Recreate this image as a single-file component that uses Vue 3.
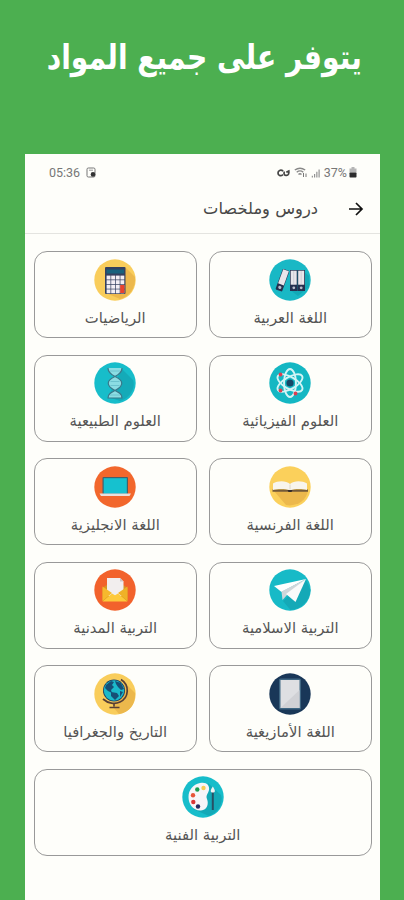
<template>
  <div class="page">
    <h1 class="headline" dir="rtl"><span>يتوفر على جميع المواد</span></h1>

    <div class="phone">
      <div class="status-bar">
        <div class="status-left">
          <span class="clock">05:36</span>
          <svg class="notify" viewBox="0 0 10 11">
            <rect x="1" y="1" width="8" height="9" rx="1.3" fill="none" stroke="#777" />
            <path d="M3 3.2h4" stroke="#999" />
            <circle cx="7" cy="7.4" r="2.3" fill="#333" />
          </svg>
        </div>
        <div class="status-right">
          <svg class="vpn" viewBox="0 0 13 8">
            <path d="M6.200 2C3.600.4 1 1.400 1 4s2.600 3.600 5 1.600" fill="none" stroke="#444" stroke-width="1.700" />
            <path d="M7.400 2.500c-1 2.200 0 4 2 3.900S12.200 4.300 11.800 2L9.300 3.200" fill="none" stroke="#444" stroke-width="1.700" />
          </svg>
          <svg class="wifi" viewBox="0 0 14 11">
            <g fill="none" stroke="#888" stroke-width="1.400">
              <path d="M.8 3Q6 -.6 11.200 3" />
              <path d="M2.700 5.200Q6 2.600 9.300 5.200" />
              <path d="M4.500 7.400Q6 6 7.500 7.400" />
            </g>
            <path d="M9.500 6v4M12 6.500v3.500" stroke="#777" />
          </svg>
          <svg class="signal" viewBox="0 0 10 10">
            <path d="M1.500 10V8M4 10V6M6.500 10V3.500M9 10V1" stroke="#909090" stroke-width="1.300" />
          </svg>
          <span class="percent">37%</span>
          <svg class="battery" viewBox="0 0 8 11">
            <path d="M2.500 0h3v1.500H7.500V5.500H.5V1.500h2z" fill="#b5b5b5" />
            <rect x=".5" y="5.500" width="7" height="5" rx=".8" fill="#2c2c2c" />
          </svg>
        </div>
      </div>

      <div class="app-bar" dir="rtl">
        <svg class="arrow" viewBox="0 0 16 16">
          <path d="M1 8h13M8 2l6 6-6 6" fill="none" stroke="#111" stroke-width="1.700" />
        </svg>
        <span class="app-title">دروس وملخصات</span>
      </div>

      <div class="grid" dir="rtl">
        <div
          v-for="subject in subjects"
          :key="subject.icon"
          class="card"
          :class="{ wide: subject.wide }"
        >
          <svg class="icon" viewBox="0 0 42 42">
            <circle cx="21" cy="21" r="20.700" :fill="subject.color" />

            <g v-if="subject.icon === 'binders'">
              <path d="M29 37l11-9V17l-7-6H21v20z" fill="#12a9b6" />
              <g transform="rotate(20 13 21)">
                <rect x="10" y="10" width="7" height="22" rx="1" fill="#25304f" />
                <rect x="10.500" y="10.500" width="6" height="15" fill="#e8e6ea" />
                <circle cx="13.500" cy="28.700" r="1.600" fill="#b9bdcb" />
              </g>
              <rect x="21" y="11" width="7.500" height="21" fill="#25304f" />
              <rect x="28.500" y="11" width="7.500" height="21" fill="#25304f" />
              <rect x="21.700" y="11.700" width="6" height="14" fill="#e8e6ea" />
              <rect x="29.200" y="11.700" width="6" height="14" fill="#e8e6ea" />
              <path d="M24.700 12v13M32.200 12v13" stroke="#cbc8d0" stroke-width=".8" />
              <circle cx="24.800" cy="28.800" r="1.400" fill="#b9bdcb" />
              <circle cx="32.200" cy="28.800" r="1.400" fill="#b9bdcb" />
            </g>

            <g v-else-if="subject.icon === 'calculator'">
              <path d="M31 8l10 10c1 11-6 20-15 22l-14-6z" fill="#ecb84c" />
              <rect x="11" y="8" width="20.500" height="27" rx="1" fill="#34405f" />
              <rect x="12.500" y="10.500" width="17.500" height="4" fill="#17617d" />
              <g fill="#f2eef4">
                <template v-for="row in 4" :key="row">
                  <rect
                    v-for="col in 4"
                    :key="col"
                    :x="8 + col * 4.600"
                    :y="12 + row * 4.600"
                    width="3.900"
                    height="3.900"
                  />
                </template>
              </g>
              <rect x="26.200" y="26" width="4.200" height="8" fill="#e8432e" />
            </g>

            <g v-else-if="subject.icon === 'atom'">
              <g fill="none" stroke="#d3f4f5" stroke-width="1.900">
                <ellipse cx="21" cy="21" rx="6" ry="14" />
                <ellipse cx="21" cy="21" rx="6" ry="14" transform="rotate(60 21 21)" />
                <ellipse cx="21" cy="21" rx="6" ry="14" transform="rotate(120 21 21)" />
              </g>
              <circle cx="21" cy="21" r="3.600" fill="#174766" />
              <circle cx="11.500" cy="12.500" r="1.900" fill="#dc3f52" />
              <circle cx="11.500" cy="28.500" r="1.900" fill="#dc3f52" />
              <circle cx="26.500" cy="31.500" r="1.900" fill="#dc3f52" />
            </g>

            <g v-else-if="subject.icon === 'dna'">
              <path d="M28 7l11 11c3 8-4 19-13 21l-12-4z" fill="#14aab8" />
              <g fill="#8bdde3" stroke="#39788a" stroke-width="1.200">
                <path d="M14 6c0 4 3 6.500 7 8.500 4-2 7-4.500 7-8.500" />
                <path d="M21 14.500c-9 4-9 9.500 0 14 9-4.500 9-10 0-14z" />
                <path d="M14 36c0-4 3-5.500 7-7.500 4 2 7 3.500 7 7.500z" />
              </g>
              <path d="M16 9h10M16.500 19.500h9M16.500 23.500h9M16 33h10" stroke="#6cc3ce" stroke-width="1" />
            </g>

            <g v-else-if="subject.icon === 'book'">
              <path d="M5 25l12 14c10 2 20-4 22-14z" fill="#ecb84c" />
              <path d="M3.500 23.500h35.500v2.200H3.500z" fill="#745a38" />
              <path d="M4 24V17.500c5-3 13-3 17 .5 4-3.500 12-3.500 17-.5V24c-5-1.500-12-1.500-17 .3C16 22.500 9 22.500 4 24z" fill="#f8f5ec" />
              <path d="M21 18.500v5" stroke="#d5cebd" stroke-width=".8" />
              <path d="M18.500 24h5l-1 2h-3z" fill="#352c2b" />
            </g>

            <g v-else-if="subject.icon === 'laptop'">
              <rect x="8.500" y="11" width="25.500" height="17.500" rx="1" fill="#45606a" />
              <rect x="9.700" y="12.200" width="23.100" height="15.500" fill="#16c1cf" />
              <path d="M5.500 27.500h31.500l-1.500 2.500H7z" fill="#e9e0dc" />
            </g>

            <g v-else-if="subject.icon === 'plane'">
              <path d="M37 11l4.500 10c-1 11-9 19-20 20L14 32z" fill="#14a9b7" />
              <path d="M37 10L5 17l7.500 6z" fill="#fff" />
              <path d="M37 10L12.500 22.500 13.500 31l4.500-5z" fill="#cfd6da" />
              <path d="M37 10L17 25l9.500 8z" fill="#fafafa" />
            </g>

            <g v-else-if="subject.icon === 'mail'">
              <path d="M8.500 19L21 10l12.500 9v13h-25z" fill="#d79426" />
              <path d="M13 9h13l3.500 3.500V27H13z" fill="#f2eeee" />
              <path d="M26 9v3.500h3.500z" fill="#cbc6c8" />
              <path d="M8.500 17.500V32L18 24z" fill="#f6b92d" />
              <path d="M33.500 17.500V32L24 24z" fill="#efb127" />
              <path d="M8.500 32.500L18 24.500l3 1.700 3-1.700 9.500 8z" fill="#fdc93b" />
            </g>

            <g v-else-if="subject.icon === 'tablet'">
              <rect x="10" y="5.500" width="22" height="31" rx="1.500" fill="#3f6682" />
              <rect x="11.500" y="7" width="19" height="28" fill="#dedfe2" />
              <path d="M30.500 17v18h-19z" fill="#d0d1d5" />
            </g>

            <g v-else-if="subject.icon === 'globe'">
              <path d="M31 10l10 10c1 11-6 20-16 21l-6-7z" fill="#ecb84c" />
              <path d="M27 6.500C36 12 35 25 26 29c-5 2.500-12 1.500-17-3" fill="none" stroke="#573e36" stroke-width="1.700" />
              <circle cx="20" cy="17.500" r="11" fill="#1d3d60" />
              <circle cx="20" cy="17.500" r="10.200" fill="#1bb9cb" />
              <path d="M12 12l5-4 3 1-2 3 2 2-3 3 1 3-4-2-3-3z" fill="#174f76" />
              <path d="M21 8l6 2 3 6-3 1-3-3-2-3zM17 19l6 1 2 3-4 4-4-4zM26 18l3 1-3 5z" fill="#174f76" />
              <path d="M20 30v3.500M15.500 34.500h10" stroke="#573e36" stroke-width="1.600" />
            </g>

            <g v-else-if="subject.icon === 'palette'">
              <path d="M26 7l13 12c3 9-4 18-12 21L11 33z" fill="#13a9b7" />
              <path d="M18 7c6-1.500 10 2 9 7-.8 4-3.500 5-2 9 2 5 0 11-6 11.500C11 35 6.500 28 6.500 21S11 8.500 18 7z" fill="#f7f5f8" />
              <circle cx="21.500" cy="12" r="2.200" fill="#f5cc55" />
              <circle cx="15.300" cy="13.500" r="2.200" fill="#1c9d50" />
              <circle cx="11" cy="19.300" r="2.200" fill="#e75438" />
              <circle cx="11.300" cy="26" r="2.200" fill="#d93636" />
              <circle cx="16" cy="30.500" r="2.200" fill="#242c62" />
              <path d="M30.800 16v18" stroke="#285064" stroke-width="2" />
              <path d="M30.800 10.500c3 4 2.500 6 0 6s-3-2 0-6z" fill="#f0f2f3" />
            </g>
          </svg>
          <span class="label">{{ subject.name }}</span>
        </div>
      </div>
    </div>
  </div>
</template>

<script setup>
const subjects = [
  { name: 'اللغة العربية', icon: 'binders', color: '#19b8c5' },
  { name: 'الرياضيات', icon: 'calculator', color: '#f9cd5b' },
  { name: 'العلوم الفيزيائية', icon: 'atom', color: '#14b7c3' },
  { name: 'العلوم الطبيعية', icon: 'dna', color: '#17bdca' },
  { name: 'اللغة الفرنسية', icon: 'book', color: '#fbd05b' },
  { name: 'اللغة الانجليزية', icon: 'laptop', color: '#f2672c' },
  { name: 'التربية الاسلامية', icon: 'plane', color: '#17bac7' },
  { name: 'التربية المدنية', icon: 'mail', color: '#f2622c' },
  { name: 'اللغة الأمازيغية', icon: 'tablet', color: '#193758' },
  { name: 'التاريخ والجغرافيا', icon: 'globe', color: '#f9cd5b' },
  { name: 'التربية الفنية', icon: 'palette', color: '#17bdca', wide: true },
];
</script>

<style>
body {
  background: #4caf50;
}
</style>

<style scoped>
.page {
  box-sizing: border-box;
  width: 404px;
  height: 900px;
  display: flex;
  flex-direction: column;
  overflow: hidden;
  background: #4caf50;
  font-family: 'DejaVu Sans', sans-serif;
}

.headline {
  flex: none;
  height: 154px;
  margin: 0;
  padding: 36px 0 0 4px;
  box-sizing: border-box;
  text-align: center;
  color: #fff;
  font-size: 34px;
  line-height: 42px;
  white-space: nowrap;
}

/* Condense the bold face horizontally */
.headline span {
  display: inline-block;
  transform: scaleX(0.828);
}

.phone {
  flex: 1;
  margin: 0 24px 0 25px;
  background: #fefefa;
}

.status-bar {
  height: 37px;
  padding: 0 23px 0 24px;
  display: flex;
  justify-content: space-between;
  align-items: center;
  box-sizing: border-box;
  font-family: Roboto, sans-serif;
  font-size: 12.5px;
  color: #777;
}

.status-left,
.status-right {
  display: flex;
  align-items: center;
}

.notify {
  width: 10px;
  height: 11px;
  margin-left: 6px;
}

.vpn {
  width: 13px;
  height: 8px;
  margin-right: 4px;
}

.wifi {
  width: 14px;
  height: 11px;
  margin-right: 3px;
}

.signal {
  width: 9px;
  height: 10px;
  margin-right: 4px;
}

.battery {
  width: 8px;
  height: 11px;
  margin-left: 2px;
}

.app-bar {
  height: 43px;
  padding-right: 16px;
  display: flex;
  align-items: center;
  box-sizing: border-box;
  border-bottom: 1px solid #e4e4e0;
}

.arrow {
  width: 16px;
  height: 16px;
  margin-top: -6px;
}

.app-title {
  margin: -7px 30px 0 0;
  font-size: 16.3px;
  color: #484848;
}

.grid {
  padding: 17px 8.5px 0 9px;
  display: grid;
  grid-template-columns: 162.5px 162.5px;
  grid-auto-rows: 87px;
  gap: 16.5px 12.5px;
}

.card {
  box-sizing: border-box;
  padding-top: 6.5px;
  display: flex;
  flex-direction: column;
  align-items: center;
  border: 1px solid #999;
  border-radius: 13px;
}

.card.wide {
  grid-column: span 2;
}

.icon {
  flex: none;
  width: 42px;
  height: 42px;
}

.label {
  margin-top: 5px;
  font-size: 14.8px;
  line-height: 24px;
  color: #555;
  white-space: nowrap;
}
</style>
